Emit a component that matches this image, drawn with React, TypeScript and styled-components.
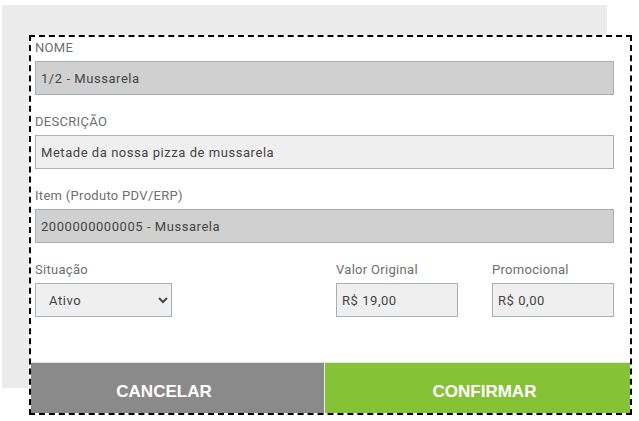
import React from "react";
import styled, { createGlobalStyle } from "styled-components";

const GlobalStyle = createGlobalStyle`
  html, body { margin: 0; padding: 0; background: #ffffff; }
  body { font-family: Roboto, "Liberation Sans", sans-serif; }
  * { box-sizing: border-box; }
`;

const Stage = styled.div`
  position: relative;
  width: 639px;
  height: 421px;
  padding: 5px 0 0 2px;
  overflow: hidden;
`;

const BackPanel = styled.div`
  width: 605px;
  height: 383px;
  background: #ebebeb;
`;

const Modal = styled.div`
  position: absolute;
  left: 29px;
  top: 35px;
  width: 603px;
  height: 380px;
  border: 2px dashed #000;
  background: #ffffff;
  display: flex;
  flex-direction: column;
`;

const Body = styled.div`
  padding: 3px 16px 0 4px;
  display: flex;
  flex-direction: column;
`;

const Field = styled.div<{ $last?: boolean }>`
  display: flex;
  flex-direction: column;
  margin-bottom: ${(p) => (p.$last ? 0 : 19)}px;
`;

const Label = styled.label`
  font-size: 13px;
  line-height: 16px;
  height: 16px;
  color: #6e6e6e;
  letter-spacing: 0.3px;
  margin-bottom: 5px;
  white-space: nowrap;
`;

const Input = styled.input<{ $locked?: boolean }>`
  height: 34px;
  width: 100%;
  border: 1px solid #a8afb4;
  border-radius: 0;
  background: ${(p) => (p.$locked ? "#d0d0d0" : "#efefef")};
  color: #454545;
  font-family: Roboto, "Liberation Sans", sans-serif;
  font-size: 13px;
  letter-spacing: 0.55px;
  padding: 0 5px;
  outline: none;
  margin: 0;
`;

const Row = styled.div`
  display: grid;
  grid-template-columns: 1fr 122px 122px;
  column-gap: 34px;
`;

const Select = styled.select`
  width: 137px;
  height: 34px;
  border: 1px solid #a8afb4;
  border-radius: 0;
  background: #efefef;
  color: #454545;
  font-family: Roboto, "Liberation Sans", sans-serif;
  font-size: 13px;
  letter-spacing: 0.55px;
  padding: 0 4px 0 9px;
  margin: 0;
  outline: none;
`;

const Footer = styled.div`
  margin-top: auto;
  height: 51px;
  border-top: 1px solid #e4e4e4;
  display: grid;
  grid-template-columns: 294px 1fr;
`;

const FooterButton = styled.button<{ $variant: "cancel" | "confirm" }>`
  border: none;
  border-radius: 0;
  margin: 0;
  height: 100%;
  cursor: pointer;
  color: #ffffff;
  font-family: "Liberation Sans", Arial, sans-serif;
  font-weight: 700;
  font-size: 17px;
  text-transform: uppercase;
  padding-top: 8px;
  background: ${(p) => (p.$variant === "cancel" ? "#8a8a8a" : "#85c236")};
  border-right: ${(p) => (p.$variant === "cancel" ? "1px solid #ececec" : "none")};
  padding-right: ${(p) => (p.$variant === "cancel" ? 27 : 0)}px;
  padding-left: ${(p) => (p.$variant === "confirm" ? 14 : 0)}px;
`;

export default function App() {
  return (
    <>
      <GlobalStyle />
      <Stage>
        <BackPanel />
        <Modal>
          <Body>
            <Field>
              <Label>NOME</Label>
              <Input $locked readOnly value="1/2 - Mussarela" />
            </Field>
            <Field>
              <Label>DESCRIÇÃO</Label>
              <Input defaultValue="Metade da nossa pizza de mussarela" />
            </Field>
            <Field>
              <Label>Item (Produto PDV/ERP)</Label>
              <Input $locked readOnly value="2000000000005 - Mussarela" />
            </Field>
            <Row>
              <Field $last>
                <Label>Situação</Label>
                <Select defaultValue="ativo">
                  <option value="ativo">Ativo</option>
                  <option value="inativo">Inativo</option>
                </Select>
              </Field>
              <Field $last>
                <Label>Valor Original</Label>
                <Input defaultValue="R$ 19,00" />
              </Field>
              <Field $last>
                <Label>Promocional</Label>
                <Input defaultValue="R$ 0,00" />
              </Field>
            </Row>
          </Body>
          <Footer>
            <FooterButton $variant="cancel">Cancelar</FooterButton>
            <FooterButton $variant="confirm">Confirmar</FooterButton>
          </Footer>
        </Modal>
      </Stage>
    </>
  );
}
